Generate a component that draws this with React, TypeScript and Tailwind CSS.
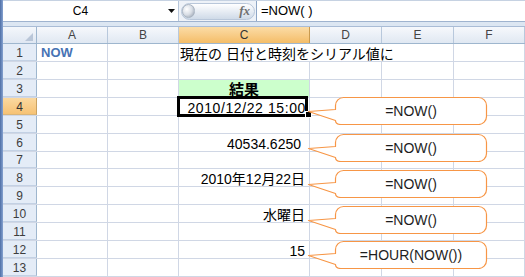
import React from "react";

type Col = { key: string; cls: string };

const COLS: Col[] = [
  { key: "A", cls: "w-[71px]" },
  { key: "B", cls: "w-[71px]" },
  { key: "C", cls: "w-[131px]" },
  { key: "D", cls: "w-[72px]" },
  { key: "E", cls: "w-[72px]" },
  { key: "F", cls: "flex-1" },
];

// C列の値（右寄せ）
const VALUES: Record<number, { text: string; cls: string }> = {
  4: { text: "2010/12/22 15:00", cls: "pr-[3px] tracking-[0.6px]" },
  6: { text: "40534.6250", cls: "pr-[8px]" },
  8: { text: "2010年12月22日", cls: "pr-[4px]" },
  10: { text: "水曜日", cls: "pr-[4px]" },
  12: { text: "15", cls: "pr-[4px]" },
};

const CALLOUTS = [
  { top: "top-[96px]", text: "=NOW()" },
  { top: "top-[133px]", text: "=NOW()" },
  { top: "top-[169px]", text: "=NOW()" },
  { top: "top-[205px]", text: "=NOW()" },
  { top: "top-[240px]", text: "=HOUR(NOW())" },
];

const cell = "h-full border-r border-[#d0d7e5] flex items-end leading-[13px]";

function RowHeader({ n }: { n: number }) {
  const active = n === 4;
  return (
    <div
      className={
        "flex w-[34px] shrink-0 items-end justify-center border-r border-b leading-[14px] text-[12px] " +
        (active
          ? "bg-gradient-to-b from-[#fbd9a0] to-[#f6c274] border-r-[#c9a262] border-b-[#d9b57a] text-[#333]"
          : "bg-[#e4ecf7] border-r-[#9eb6ce] border-b-[#c3d1e4] text-[#3d3d3d]")
      }
    >
      {n}
    </div>
  );
}

function Row({ n }: { n: number }) {
  if (n === 1) {
    return (
      <div className="flex h-[18px] border-b border-[#d0d7e5]">
        <RowHeader n={n} />
        <div className={`${cell} w-[71px] pl-[4px] pb-[2px] text-[13px] font-bold text-[#4773b4]`}>NOW</div>
        <div className={`${cell} w-[71px]`} />
        <div className={`${cell} w-[275px] pl-[1px] whitespace-nowrap text-[14px] text-black`}>
          現在の 日付と時刻をシリアル値に
        </div>
        <div className={`${cell} flex-1`} />
      </div>
    );
  }
  const v = VALUES[n];
  return (
    <div className="flex h-[18px] border-b border-[#d0d7e5]">
      <RowHeader n={n} />
      {COLS.map((c) => {
        if (c.key === "C" && n === 3) {
          return (
            <div key={c.key} className={`${cell} ${c.cls} justify-center bg-[#ccffcc] pb-[1px] text-[15px] font-bold text-black`}>
              結果
            </div>
          );
        }
        if (c.key === "C" && v) {
          return (
            <div key={c.key} className={`${cell} ${c.cls} justify-end whitespace-nowrap text-[14px] text-black ${v.cls}`}>
              {v.text}
            </div>
          );
        }
        return <div key={c.key} className={`${cell} ${c.cls}`} />;
      })}
    </div>
  );
}

function Callout({ top, text }: { top: string; text: string }) {
  return (
    <div className={`absolute left-[305px] ${top} h-[29px] w-[183px]`}>
      <svg className="absolute inset-0" width="183" height="29" viewBox="0 0 183 29">
        <path
          d="M38.5 1.5 H173.5 A8 8 0 0 1 181.5 9.5 V20.5 A8 8 0 0 1 173.5 28.5 H36 Q30.5 28.5 30.5 24.5 L3.5 15.5 L30.5 13.5 V9.5 A8 8 0 0 1 38.5 1.5 Z"
          fill="white"
          stroke="#f79646"
          strokeWidth="1.2"
          strokeLinejoin="round"
        />
      </svg>
      <div className="absolute left-[30px] right-[1px] top-[1px] bottom-0 flex items-center justify-center font-['Liberation_Sans'] text-[14px] text-[#1e1e1e]">
        {text}
      </div>
    </div>
  );
}

export default function App() {
  return (
    <div className="relative flex h-[277px] w-[525px] overflow-hidden bg-white font-['Liberation_Sans','Noto_Sans_CJK_JP',sans-serif]">
      <div className="w-[3px] shrink-0 bg-gradient-to-r from-[#4f6fa6] to-[#86a3d1]" />
      <div className="flex min-w-0 flex-1 flex-col">
        {/* 数式バー */}
        <div className="flex h-[27px] shrink-0 flex-col bg-[#dce6f2]">
          <div className="flex h-[22px] border-t border-b border-t-[#c6d2e2] border-b-[#9fb3cf]">
            <div className="flex w-[175px] items-center bg-white">
              <div className="w-[155px] text-center text-[12px] text-black">C4</div>
              <svg className="ml-[10px]" width="7" height="4" viewBox="0 0 7 4">
                <path d="M0 0 H7 L3.5 4 Z" fill="#111" />
              </svg>
            </div>
            <div className="flex w-[78px] items-center border-l border-[#b7c6da] bg-[#eef2f8] pl-[2px] pr-[1px]">
              <div className="flex h-[17px] flex-1 items-center rounded-full border border-[#b9c7da] bg-gradient-to-b from-white to-[#cfdae8]">
                <div className="h-[14px] w-[13px] rounded-full border border-[#a9b4c2] bg-radial-[at_35%_35%] from-white via-[#d9dee6] to-[#8f9aa8]" />
                <span className="ml-auto mr-[4px] font-['Liberation_Serif'] text-[13px] font-bold italic text-[#707070]">fx</span>
              </div>
            </div>
            <div className="flex flex-1 items-center border-l border-[#8ea6c6] bg-white pl-[4px] text-[13px] text-black">
              =NOW( )
            </div>
          </div>
          <div className="flex-1 border-b border-[#a9bcd6]" />
        </div>

        {/* 列見出し */}
        <div className="flex h-[17px] shrink-0 border-b border-[#9eb6ce]">
          <div className="relative w-[34px] shrink-0 border-r border-[#9eb6ce] bg-gradient-to-b from-[#f4f7fb] to-[#dfe7f2]">
            <svg className="absolute right-[3px] bottom-[2px]" width="8" height="8" viewBox="0 0 8 8">
              <path d="M8 0 V8 H0 Z" fill="#b9c6d8" />
            </svg>
          </div>
          {COLS.map((c) =>
            c.key === "C" ? (
              <div
                key={c.key}
                className={`${c.cls} flex items-center justify-center border-r border-[#c99a4e] bg-gradient-to-b from-[#fbdca6] to-[#f4bd67] text-[12px] text-[#333]`}
              >
                {c.key}
              </div>
            ) : (
              <div
                key={c.key}
                className={`${c.cls} flex items-center justify-center border-r border-[#b8c8dc] bg-gradient-to-b from-[#f6f8fc] to-[#e0e8f2] text-[12px] text-[#444]`}
              >
                {c.key}
              </div>
            )
          )}
        </div>

        {Array.from({ length: 13 }, (_, i) => (
          <Row key={i + 1} n={i + 1} />
        ))}
      </div>

      {/* 選択セル C4 */}
      <div className="absolute left-[177px] top-[96px] h-[21px] w-[131px] border-[3px] border-black" />
      <div className="absolute left-[305px] top-[111px] h-[7px] w-[7px] border border-white bg-black" />

      {CALLOUTS.map((c, i) => (
        <Callout key={i} top={c.top} text={c.text} />
      ))}
    </div>
  );
}
